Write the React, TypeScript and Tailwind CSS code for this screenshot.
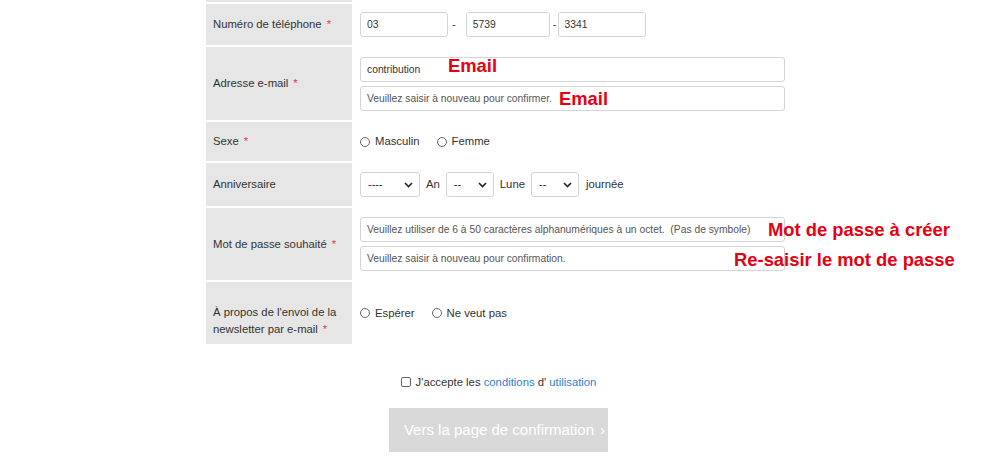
import React from "react";

const Star = () => <span className="text-[#e8384f] ml-[5px]">*</span>;

const Label = ({ children, extra = "" }: { children: React.ReactNode; extra?: string }) => (
  <div className={`w-[146px] shrink-0 bg-[#e6e6e6] flex items-center pl-[7px] pr-[2px] text-[11.3px] leading-[17px] text-[#333] ${extra}`}>
    <div>{children}</div>
  </div>
);

const TextInput = ({ w, value, placeholder }: { w: string; value?: string; placeholder?: string }) => (
  <input
    readOnly
    value={value}
    placeholder={placeholder}
    className={`${w} h-[25px] border border-[#d4d4d4] rounded-[3px] px-[6px] text-[10.3px] text-[#333] placeholder:text-[#555] bg-white outline-none font-['Liberation_Sans',Arial,sans-serif]`}
  />
);

const Select = ({ w, text }: { w: string; text: string }) => (
  <div className={`${w} h-[25px] border border-[#d4d4d4] rounded-[3px] bg-white flex items-center justify-between pl-[7px] pr-[6px]`}>
    <span className="text-[11px] text-[#222]">{text}</span>
    <svg width="9" height="6" viewBox="0 0 9 6">
      <path d="M1 1 L4.5 4.5 L8 1" fill="none" stroke="#222" strokeWidth="1.6" />
    </svg>
  </div>
);

const Radio = ({ label }: { label: string }) => (
  <label className="flex items-center gap-[5px]">
    <span className="w-[10px] h-[10px] rounded-full border border-[#666] bg-white" />
    <span>{label}</span>
  </label>
);

const Note = ({ className, children }: { className: string; children: React.ReactNode }) => (
  <div className={`absolute text-[#e60012] font-bold text-[18.4px] leading-[20px] whitespace-nowrap ${className}`}>{children}</div>
);

export default function App() {
  return (
    <div className="w-[1000px] h-[472px] bg-white font-['Liberation_Sans',Arial,sans-serif] text-[#333] relative">
      <div className="w-[588px] ml-[206px] flex flex-col gap-[2px]">
        <div className="h-[2px] flex">
          <div className="w-[146px] bg-[#e6e6e6]" />
        </div>
        {/* Phone */}
        <div className="h-[41px] flex">
          <Label>
            Numéro de téléphone<Star />
          </Label>
          <div className="flex items-center pl-[8px] text-[11.3px]">
            <TextInput w="w-[88px]" value="03" />
            <span className="ml-[4px] mr-[10px]">-</span>
            <TextInput w="w-[84px]" value="5739" />
            <span className="ml-[3px] mr-[1px]">-</span>
            <TextInput w="w-[88px]" value="3341" />
          </div>
        </div>
        {/* Email */}
        <div className="h-[73px] flex">
          <Label>
            Adresse e-mail<Star />
          </Label>
          <div className="flex flex-col justify-center gap-[4px] pl-[8px]">
            <TextInput w="w-[425px]" value="contribution" />
            <TextInput w="w-[425px]" placeholder="Veuillez saisir à nouveau pour confirmer." />
          </div>
        </div>
        {/* Sexe */}
        <div className="h-[39px] flex">
          <Label>
            Sexe<Star />
          </Label>
          <div className="flex items-center pl-[8px] gap-[17px] text-[11.3px]">
            <Radio label="Masculin" />
            <Radio label="Femme" />
          </div>
        </div>
        {/* Anniversaire */}
        <div className="h-[43px] flex">
          <Label>Anniversaire</Label>
          <div className="flex items-center pl-[8px] text-[11.3px]">
            <Select w="w-[60px]" text="----" />
            <span className="mx-[6px]">An</span>
            <Select w="w-[48px]" text="--" />
            <span className="mx-[6px]">Lune</span>
            <Select w="w-[48px]" text="--" />
            <span className="ml-[7px]">journée</span>
          </div>
        </div>
        {/* Password */}
        <div className="h-[72px] flex">
          <Label>
            Mot de passe souhaité<Star />
          </Label>
          <div className="flex flex-col justify-center gap-[4px] pl-[8px]">
            <TextInput w="w-[425px]" placeholder="Veuillez utiliser de 6 à 50 caractères alphanumériques à un octet.  (Pas de symbole)" />
            <TextInput w="w-[425px]" placeholder="Veuillez saisir à nouveau pour confirmation." />
          </div>
        </div>
        {/* Newsletter */}
        <div className="h-[62px] flex">
          <Label extra="pt-[16px]">
            À propos de l'envoi de la
            <br />
            newsletter par e-mail<Star />
          </Label>
          <div className="flex items-center pl-[8px] gap-[17px] text-[11.3px]">
            <Radio label="Espérer" />
            <Radio label="Ne veut pas" />
          </div>
        </div>
      </div>

      <div className="flex justify-center mt-[30px] text-[11.3px]">
        <label className="flex items-center gap-[5px] ml-[-3px]">
          <span className="w-[10px] h-[10px] border border-[#666] rounded-[2px] bg-white" />
          <span>
            J'accepte les <span className="text-[#2c7fd0]">conditions</span> d'{" "}
            <span className="text-[#2c7fd0]">utilisation</span>
          </span>
        </label>
      </div>
      <div className="flex justify-center mt-[17px]">
        <button className="w-[219px] h-[44px] bg-[#d9d9d9] text-white text-[15px] flex items-center justify-center gap-[6px] ml-[-3px] pl-[12px]">
          Vers la page de confirmation <span>›</span>
        </button>
      </div>

      {/* Annotations */}
      <Note className="left-[448px] top-[56px]">Email</Note>
      <Note className="left-[559px] top-[89px]">Email</Note>
      <Note className="left-[768px] top-[220px]">Mot de passe à créer</Note>
      <Note className="left-[734px] top-[250px]">Re-saisir le mot de passe</Note>
    </div>
  );
}
